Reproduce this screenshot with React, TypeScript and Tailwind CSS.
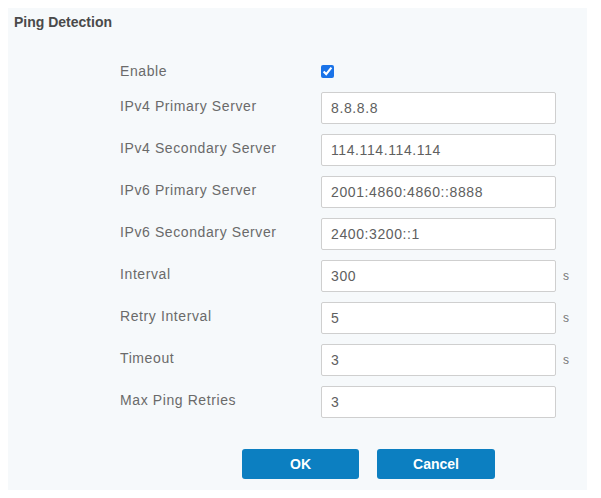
import React from 'react';

type Row = { label: string; value: string; unit?: string };

const rows: Row[] = [
    { label: 'IPv4 Primary Server', value: '8.8.8.8' },
    { label: 'IPv4 Secondary Server', value: '114.114.114.114' },
    { label: 'IPv6 Primary Server', value: '2001:4860:4860::8888' },
    { label: 'IPv6 Secondary Server', value: '2400:3200::1' },
    { label: 'Interval', value: '300', unit: 's' },
    { label: 'Retry Interval', value: '5', unit: 's' },
    { label: 'Timeout', value: '3', unit: 's' },
    { label: 'Max Ping Retries', value: '3' },
];

const App: React.FC = () => {
    return (
        <div className="w-[601px] h-[498px] bg-white p-2 font-['Liberation_Sans',Arial,sans-serif]">
            <div className="w-[579px] h-[482px] bg-[#f6f9fb] pt-[6px] px-[6px]">
                {/* Header */}
                <h2 className="text-[14px] leading-4 font-bold text-[#4a4a4a]">Ping Detection</h2>

                {/* Form */}
                <div className="mt-[27px] pl-[106px]">
                    <div className="flex items-center h-7">
                        <label className="w-[201px] text-[14px] tracking-[0.6px] text-[#6a6a6a]">Enable</label>
                        <input
                            type="checkbox"
                            defaultChecked
                            className="w-[13px] h-[13px] accent-[#1a73e8] m-0"
                        />
                    </div>

                    <div className="mt-[7px] flex flex-col gap-[10px]">
                        {rows.map((row) => (
                            <div key={row.label} className="flex items-center h-8">
                                <label className="w-[201px] text-[14px] tracking-[0.6px] text-[#6a6a6a] -mt-1">{row.label}</label>
                                <input
                                    type="text"
                                    defaultValue={row.value}
                                    className="w-[235px] h-8 bg-white border border-[#cfcfcf] rounded-[2px] px-[9px] text-[14px] tracking-[0.6px] text-[#606060] outline-none"
                                />
                                {row.unit && <span className="ml-[7px] text-[12px] text-[#777]">{row.unit}</span>}
                            </div>
                        ))}
                    </div>
                </div>

                {/* Buttons */}
                <div className="mt-[31px] flex gap-[18px] pl-[228px]">
                    <button className="w-[117px] h-[30px] bg-[#0c7fc1] rounded-[3px] text-white text-[14px] font-bold">
                        OK
                    </button>
                    <button className="w-[118px] h-[30px] bg-[#0c7fc1] rounded-[3px] text-white text-[14px] font-bold">
                        Cancel
                    </button>
                </div>
            </div>
        </div>
    );
};

export default App;
